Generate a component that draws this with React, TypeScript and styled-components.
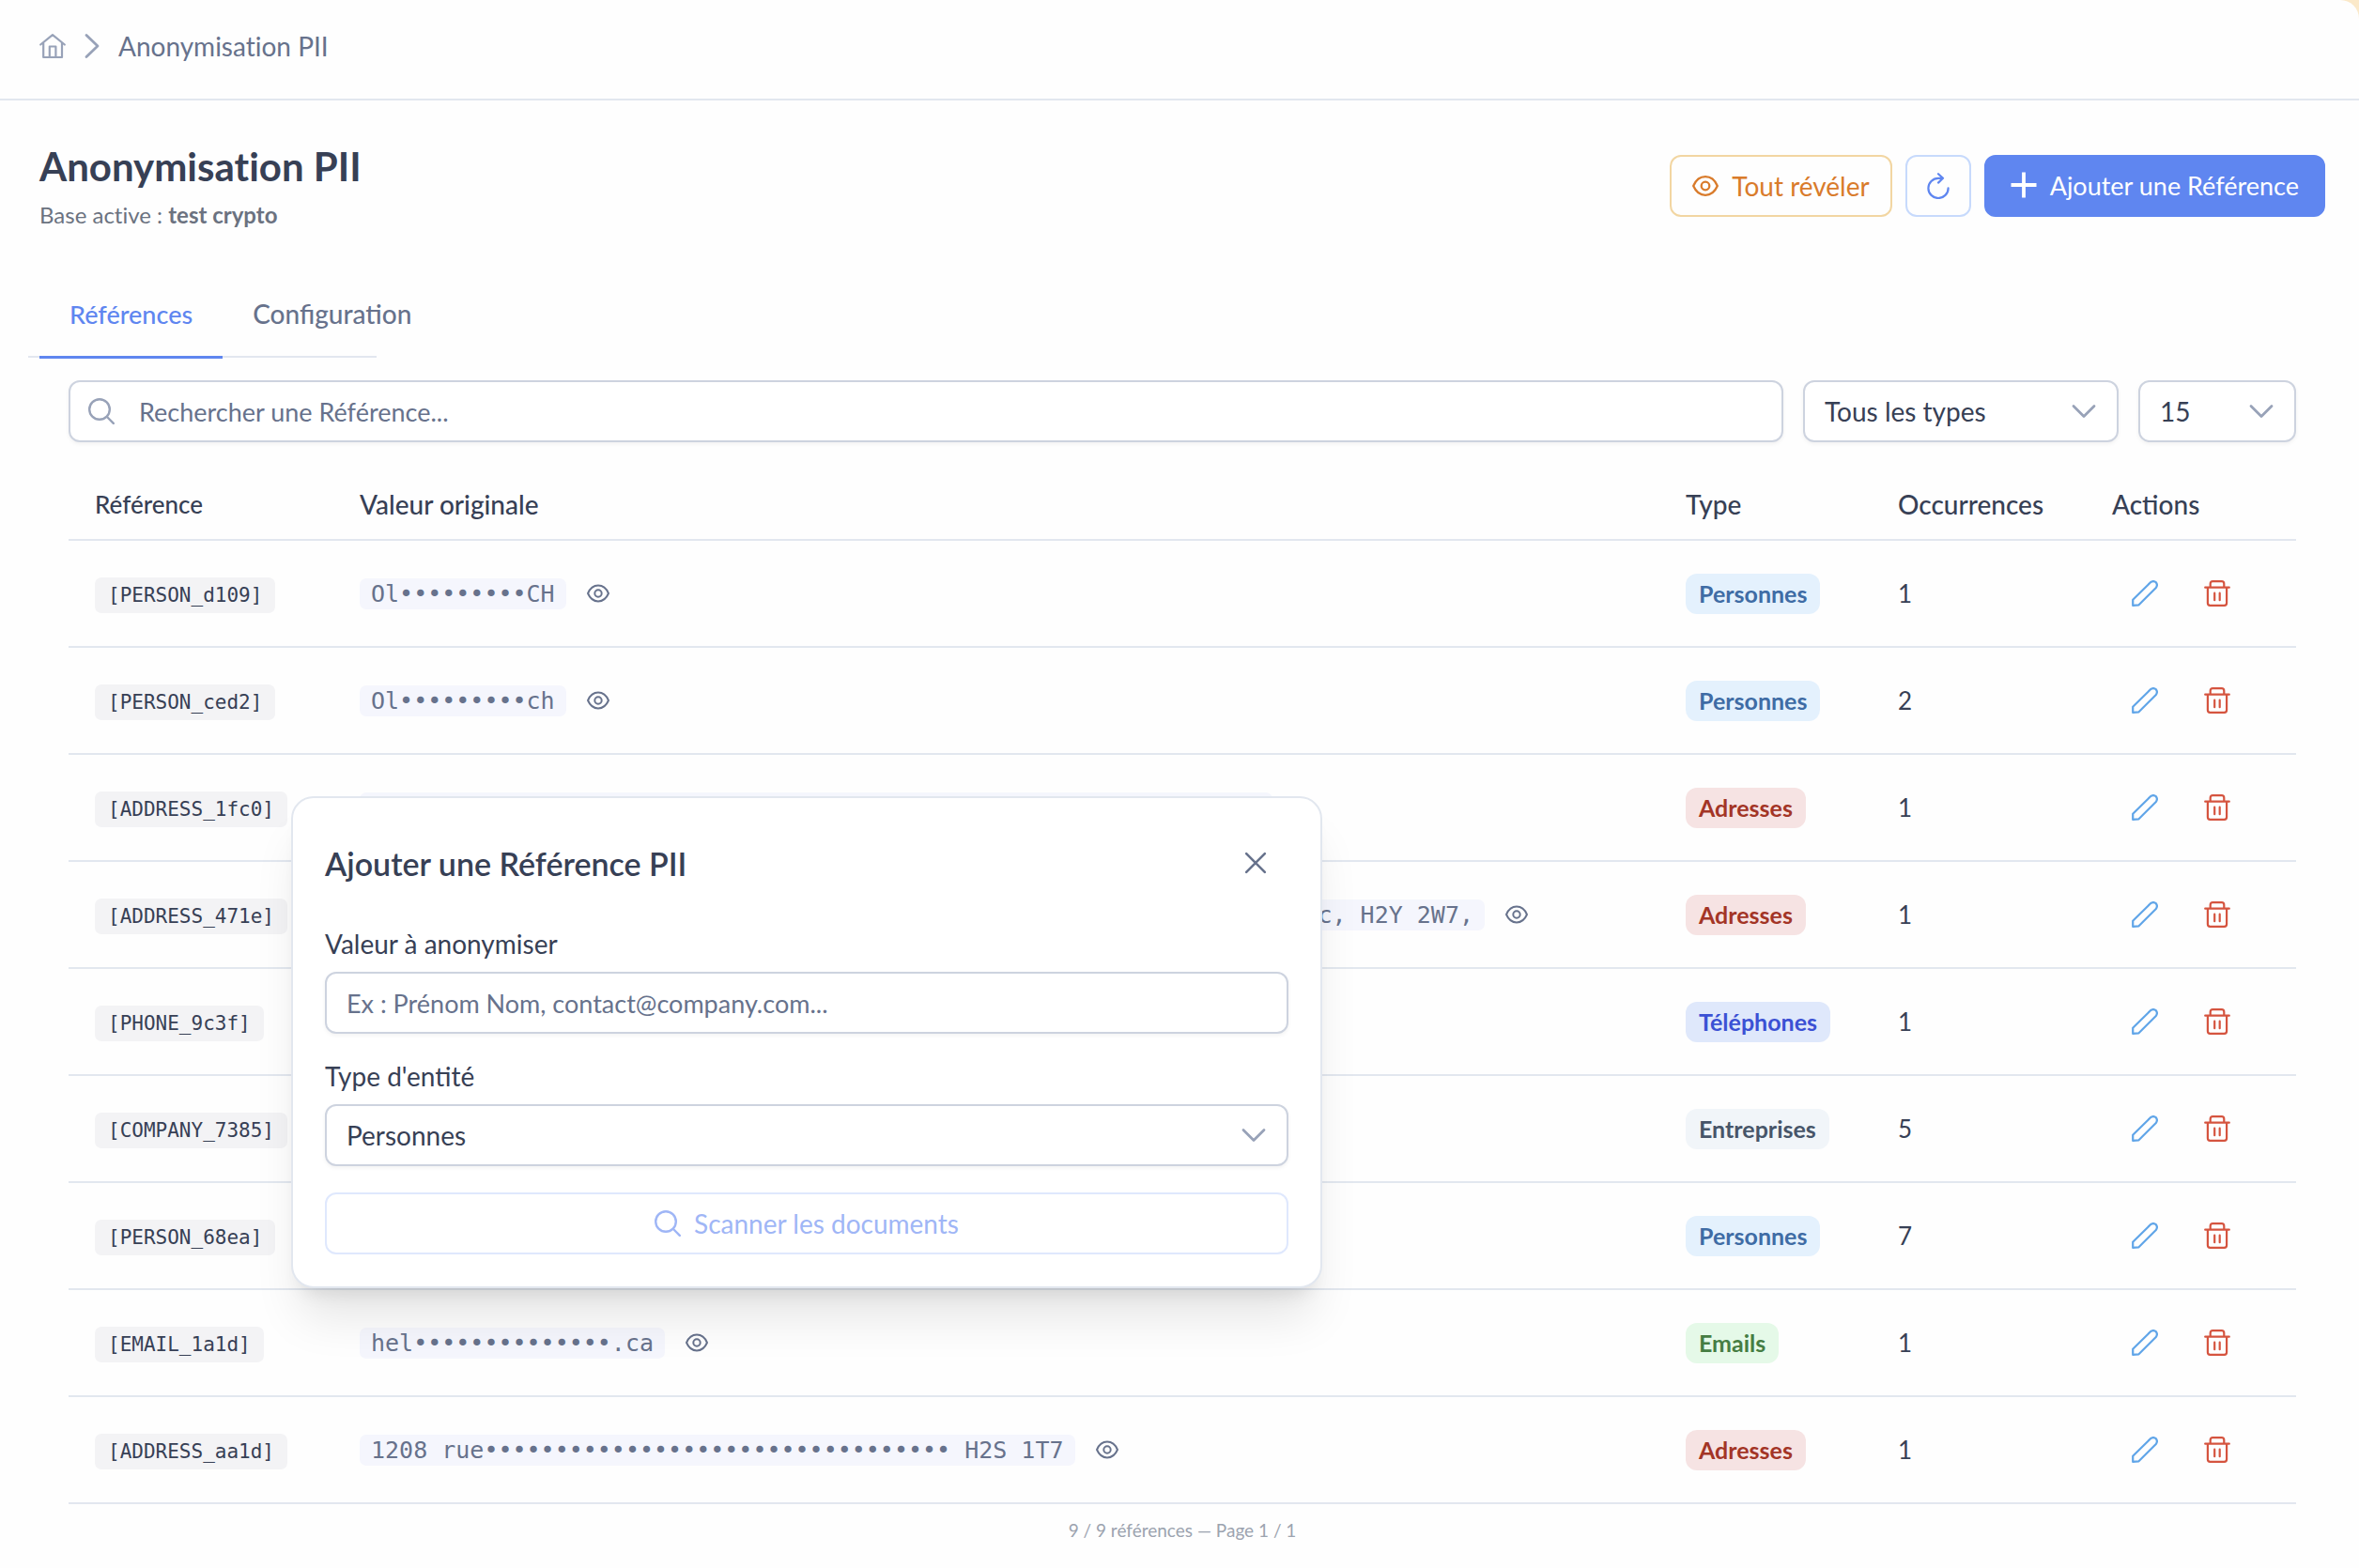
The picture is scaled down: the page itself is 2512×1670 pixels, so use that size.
import React from "react";
import styled, { createGlobalStyle } from "styled-components";

const mono = `"DejaVu Sans Mono", "Liberation Mono", monospace`;

const color = {
  text: "#374055",
  muted: "#67728c",
  faint: "#98a2b8",
  line: "#e2e7ef",
  field: "#cdd3df",
  primary: "#5f86f0",
};

const GlobalStyle = createGlobalStyle`
  * { box-sizing: border-box; }
  body {
    margin: 0;
    background: #fbe9c9;
    color: ${color.text};
    font-family: Lato, "Noto Sans", sans-serif;
    font-size: 28px;
  }
  button, input, select { font: inherit; color: inherit; }
`;

const Shell = styled.div`
  min-height: 100vh;
  border-top-right-radius: 20px;
  background: #fefefe;
`;

const Glyph = styled.svg<{ $size: number }>`
  display: block;
  flex: none;
  width: ${(p) => p.$size}px;
  height: ${(p) => p.$size}px;
  fill: none;
  stroke: currentColor;
  stroke-linecap: round;
  stroke-linejoin: round;
`;

type IconProps = { size: number };

const HomeIcon = ({ size }: IconProps) => (
  <Glyph $size={size} viewBox="0 0 28 28" strokeWidth="2.200" aria-hidden="true">
    <path d="M1.200 12.500 14 2.200 26.800 12.500M4.200 10.500V26H24V10.500M10.800 26V14.500H17.400V26" />
  </Glyph>
);
const ChevronRight = ({ size }: IconProps) => (
  <Glyph $size={size} viewBox="0 0 28 28" strokeWidth="2.800" aria-hidden="true">
    <path d="M8 2.500 20 14 8 25.500" />
  </Glyph>
);
const ChevronDown = ({ size }: IconProps) => (
  <Glyph $size={size} viewBox="0 0 28 28" strokeWidth="2.800" aria-hidden="true">
    <path d="M3 8.500 14 19.500 25 8.500" />
  </Glyph>
);
const EyeIcon = ({ size }: IconProps) => (
  <Glyph $size={size} viewBox="0 0 28 28" strokeWidth="2.300" aria-hidden="true">
    <path d="M1.200 14C4 7.500 8.500 4.200 14 4.200S24 7.500 26.800 14C24 20.500 19.500 23.800 14 23.800S4 20.500 1.200 14Z" />
    <circle cx="14" cy="14" r="4.300" />
  </Glyph>
);
const RefreshIcon = ({ size }: IconProps) => (
  <Glyph $size={size} viewBox="0 0 28 28" strokeWidth="2.200" aria-hidden="true">
    <path d="M18.500 5.800H14A10.600 10.600 0 1 0 24.600 16.400M14 1.200 19 5.800 14 10.600" />
  </Glyph>
);
const PlusIcon = ({ size }: IconProps) => (
  <Glyph $size={size} viewBox="0 0 28 28" strokeWidth="3.800" aria-hidden="true">
    <path strokeLinecap="butt" d="M14 .5V27.500M.5 14H27.500" />
  </Glyph>
);
const SearchIcon = ({ size }: IconProps) => (
  <Glyph $size={size} viewBox="0 0 28 28" strokeWidth="2.400" aria-hidden="true">
    <circle cx="12" cy="12" r="10.800" />
    <path d="M20 20 26.800 26.800" />
  </Glyph>
);
const PencilIcon = ({ size }: IconProps) => (
  <Glyph $size={size} viewBox="0 0 28 28" strokeWidth="2.200" aria-hidden="true">
    <path d="M1.200 26.800V20.800L20 2.200Q23 0 25.800 2.200 28 5 25.800 8L7.500 26.300Z" />
  </Glyph>
);
const TrashIcon = ({ size }: IconProps) => (
  <Glyph $size={size} viewBox="0 0 28 28" strokeWidth="2.200" aria-hidden="true">
    <path d="M1.200 7.700H26.800M3.900 7.700V24.300Q3.900 26.800 6.400 26.800H21.600Q24.100 26.800 24.100 24.300V7.700M6.700 7.700V3.700Q6.700 1.200 9.200 1.200H18.800Q21.300 1.200 21.300 3.700V7.700M11.200 13.700V21.200M16.700 13.700V21.200" />
  </Glyph>
);
const CloseIcon = ({ size }: IconProps) => (
  <Glyph $size={size} viewBox="0 0 28 28" strokeWidth="3" aria-hidden="true">
    <path d="M2.500 2.500 25.500 25.500M25.500 2.500 2.500 25.500" />
  </Glyph>
);

const TopBar = styled.header`
  height: 107px;
  padding: 0 42px 8px;
  border-bottom: 2px solid ${color.line};
`;
const Crumbs = styled.nav`
  display: flex;
  align-items: center;
  gap: 14px;
  height: 100%;
  color: ${color.faint};
`;
const CrumbLink = styled.a`
  color: inherit;
`;
const Crumb = styled.span`
  color: ${color.muted};
  font-variant-ligatures: none;
`;

const PageHead = styled.div`
  display: flex;
  justify-content: space-between;
  padding: 44px 36px 0 42px;
`;
const Title = styled.h1`
  margin: 0;
  font-size: 42px;
  line-height: 52px;
  font-weight: 700;
  font-variant-ligatures: none;
`;
const Base = styled.p`
  margin: 10px 0 0;
  font-size: 24px;
  line-height: 32px;
  color: #6b7280;
  font-variant-ligatures: none;
`;
const HeadActions = styled.div`
  display: flex;
  align-items: flex-start;
  gap: 14px;
  padding-top: 14px;
`;
type Tone = "amber" | "outline" | "primary";
const buttonPadding = { amber: "0 22px", outline: "0 19px", primary: "0 26px 2px" };
const buttonBorder = { amber: "#f2d6a2", outline: "#c7dafc", primary: color.primary };
const buttonText = { amber: "#d97b2b", outline: color.primary, primary: "#fff" };
const Button = styled.button<{ $tone: Tone }>`
  display: flex;
  align-items: center;
  gap: 14px;
  height: 66px;
  padding: ${(p) => buttonPadding[p.$tone]};
  border: 2px solid ${(p) => buttonBorder[p.$tone]};
  border-radius: 12px;
  background: ${(p) => (p.$tone === "primary" ? color.primary : "transparent")};
  color: ${(p) => buttonText[p.$tone]};
  font-size: ${(p) => (p.$tone === "primary" ? 27 : 28)}px;
`;

const TabList = styled.div`
  display: flex;
  width: 371px;
  height: 92px;
  margin: 44px 0 0 30px;
  padding: 0 12px;
  white-space: nowrap;
  border-bottom: 2px solid ${color.line};
`;
const Tab = styled.button<{ $active?: boolean }>`
  flex: none;
  height: 93px;
  padding: 0 32px;
  border: 0;
  border-bottom: 3px solid ${(p) => (p.$active ? color.primary : "transparent")};
  background: none;
  font-size: ${(p) => (p.$active ? 27 : 28)}px;
  font-weight: 500;
  color: ${(p) => (p.$active ? color.primary : color.muted)};
`;

const Panel = styled.main`
  padding: 24px 67px 0 73px;
`;
const Filters = styled.div`
  display: flex;
  gap: 21px;
`;
const Field = styled.div<{ $width?: number }>`
  display: flex;
  align-items: center;
  position: relative;
  flex: ${(p) => (p.$width ? `0 0 ${p.$width}px` : "1 1 auto")};
  height: 66px;
  border: 2px solid ${color.field};
  border-radius: 12px;
  background: #fff;
  box-shadow: 0 2px 4px rgba(18, 18, 23, 0.05);
  color: ${color.faint};
`;
const SearchBox = styled(Field)`
  gap: 5px;
  padding-left: 19px;
`;
const TextInput = styled.input`
  flex: 1;
  min-width: 0;
  height: 100%;
  padding: 0 21px;
  border: 0;
  outline: 0;
  background: none;
  color: ${color.text};
  font-size: 27px;
  &::placeholder {
    color: ${color.muted};
    opacity: 1;
  }
`;
const Select = styled.select`
  width: 100%;
  height: 100%;
  padding: 0 21px;
  border: 0;
  outline: 0;
  background: none;
  appearance: none;
  color: ${color.text};
`;
const SelectArrow = styled.span`
  position: absolute;
  right: 21px;
  pointer-events: none;
`;

const Table = styled.table`
  width: 100%;
  margin-top: 28px;
  border-collapse: separate;
  border-spacing: 0;
  table-layout: fixed;
`;
const Th = styled.th<{ $width?: number; $compact?: boolean }>`
  width: ${(p) => (p.$width ? `${p.$width}px` : "auto")};
  height: 77px;
  padding: 0 28px;
  border-bottom: 2px solid ${color.line};
  text-align: left;
  font-size: ${(p) => (p.$compact ? 26 : 28)}px;
  font-weight: 500;
`;
const Td = styled.td`
  height: 114px;
  padding: 0 28px;
  border-bottom: 2px solid ${color.line};
  font-size: 26px;
  white-space: nowrap;
`;
const RefCode = styled.code`
  display: inline-block;
  margin-top: 4px;
  padding: 0 14px;
  border-radius: 7px;
  background: #f3f3f5;
  font: 21px/38px ${mono};
`;
const ValueCell = styled.div`
  display: flex;
  align-items: center;
  gap: 22px;
  color: ${color.muted};
`;
const Value = styled.span`
  padding: 0 12px;
  border-radius: 7px;
  background: #f5f6fd;
  font: 25px/33px ${mono};
`;
const IconButton = styled.button<{ $color: string }>`
  display: flex;
  padding: 0;
  border: 0;
  background: none;
  color: ${(p) => p.$color};
`;
const RowActions = styled.div`
  display: flex;
  gap: 49px;
  padding-left: 21px;
`;

const tones = {
  Personnes: ["#e4f1fd", "#3f6ca5"],
  Adresses: ["#f6e3e3", "#a33526"],
  "Téléphones": ["#dfe8fb", "#3b51d4"],
  Entreprises: ["#f1f5f9", "#475569"],
  Emails: ["#e5f9e8", "#467d43"],
};
type Kind = keyof typeof tones;
const Tag = styled.span<{ $kind: Kind }>`
  display: inline-block;
  padding: 0 14px;
  border-radius: 12px;
  background: ${(p) => tones[p.$kind][0]};
  color: ${(p) => tones[p.$kind][1]};
  font-size: 25px;
  line-height: 43px;
  font-weight: 700;
`;
const Count = styled.p`
  margin: 14px 0 0;
  text-align: center;
  font-size: 19px;
  line-height: 28px;
  color: #9ca3af;
`;

const Modal = styled.section`
  position: absolute;
  left: 310px;
  top: 848px;
  width: 1098px;
  padding: 34px;
  border: 2px solid ${color.line};
  border-radius: 24px;
  background: #fff;
  box-shadow: 0 40px 50px -10px rgba(0, 0, 0, 0.1), 0 16px 20px -12px rgba(0, 0, 0, 0.1);
`;
const ModalHead = styled.div`
  display: flex;
  align-items: center;
  justify-content: space-between;
  height: 70px;
  padding-right: 23px;
`;
const ModalTitle = styled.h2`
  margin: 0;
  font-size: 34px;
  font-weight: 600;
`;
const FormRow = styled.div`
  padding-top: 34px;
  & + & { padding-top: 28px; }
`;
const Label = styled.label`
  display: block;
  margin-bottom: 13px;
  line-height: 34px;
`;
const ScanButton = styled.button`
  display: flex;
  align-items: center;
  justify-content: center;
  gap: 14px;
  width: 100%;
  height: 66px;
  margin-top: 28px;
  border: 2px solid #dfe8fd;
  border-radius: 12px;
  background: none;
  color: #9fb6f6;
`;

const dots = (n: number) => "•".repeat(n);

const rows: { code: string; value: string; kind: Kind; count: number }[] = [
  { code: "[PERSON_d109]", value: `Ol${dots(9)}CH`, kind: "Personnes", count: 1 },
  { code: "[PERSON_ced2]", value: `Ol${dots(9)}ch`, kind: "Personnes", count: 2 },
  { code: "[ADDRESS_1fc0]", value: dots(63), kind: "Adresses", count: 1 },
  { code: "[ADDRESS_471e]", value: `${dots(67)}c, H2Y 2W7,`, kind: "Adresses", count: 1 },
  { code: "[PHONE_9c3f]", value: dots(12), kind: "Téléphones", count: 1 },
  { code: "[COMPANY_7385]", value: dots(12), kind: "Entreprises", count: 5 },
  { code: "[PERSON_68ea]", value: dots(12), kind: "Personnes", count: 7 },
  { code: "[EMAIL_1a1d]", value: `hel${dots(14)}.ca`, kind: "Emails", count: 1 },
  { code: "[ADDRESS_aa1d]", value: `1208 rue${dots(33)} H2S 1T7`, kind: "Adresses", count: 1 },
];

export default function App() {
  return (
    <Shell>
      <GlobalStyle />
      <TopBar>
        <Crumbs aria-label="Fil d'Ariane">
          <CrumbLink href="#" aria-label="Accueil"><HomeIcon size={28} /></CrumbLink>
          <ChevronRight size={28} />
          <Crumb>Anonymisation PII</Crumb>
        </Crumbs>
      </TopBar>

      <PageHead>
        <div>
          <Title>Anonymisation PII</Title>
          <Base>Base active : <strong>test crypto</strong></Base>
        </div>
        <HeadActions>
          <Button $tone="amber"><EyeIcon size={28} />Tout révéler</Button>
          <Button $tone="outline" aria-label="Actualiser"><RefreshIcon size={28} /></Button>
          <Button $tone="primary"><PlusIcon size={28} />Ajouter une Référence</Button>
        </HeadActions>
      </PageHead>

      <TabList role="tablist">
        <Tab role="tab" aria-selected="true" $active>Références</Tab>
        <Tab role="tab" aria-selected="false">Configuration</Tab>
      </TabList>

      <Panel>
        <Filters>
          <SearchBox>
            <SearchIcon size={28} />
            <TextInput type="text" placeholder="Rechercher une Référence..." aria-label="Rechercher" />
          </SearchBox>
          <Field $width={336}>
            <Select aria-label="Type"><option>Tous les types</option></Select>
            <SelectArrow><ChevronDown size={28} /></SelectArrow>
          </Field>
          <Field $width={168}>
            <Select aria-label="Lignes par page"><option>15</option></Select>
            <SelectArrow><ChevronDown size={28} /></SelectArrow>
          </Field>
        </Filters>

        <Table>
          <thead>
            <tr>
              <Th $width={282} $compact>Référence</Th>
              <Th>Valeur originale</Th>
              <Th $width={226}>Type</Th>
              <Th $width={228}>Occurrences</Th>
              <Th $width={224}>Actions</Th>
            </tr>
          </thead>
          <tbody>
            {rows.map((row) => (
              <tr key={row.code}>
                <Td><RefCode>{row.code}</RefCode></Td>
                <Td>
                  <ValueCell>
                    <Value>{row.value}</Value>
                    <IconButton $color={color.muted} aria-label="Révéler"><EyeIcon size={24} /></IconButton>
                  </ValueCell>
                </Td>
                <Td><Tag $kind={row.kind}>{row.kind}</Tag></Td>
                <Td>{row.count}</Td>
                <Td>
                  <RowActions>
                    <IconButton $color="#60a5e8" aria-label="Modifier"><PencilIcon size={28} /></IconButton>
                    <IconButton $color="#d5543f" aria-label="Supprimer"><TrashIcon size={28} /></IconButton>
                  </RowActions>
                </Td>
              </tr>
            ))}
          </tbody>
        </Table>
        <Count>9 / 9 références — Page 1 / 1</Count>
      </Panel>

      <Modal role="dialog" aria-labelledby="modal-title">
        <ModalHead>
          <ModalTitle id="modal-title">Ajouter une Référence PII</ModalTitle>
          <IconButton $color={color.muted} aria-label="Fermer"><CloseIcon size={24} /></IconButton>
        </ModalHead>
        <FormRow>
          <Label htmlFor="pii-value">Valeur à anonymiser</Label>
          <Field>
            <TextInput id="pii-value" type="text" placeholder="Ex : Prénom Nom, contact@company.com..." />
          </Field>
        </FormRow>
        <FormRow>
          <Label htmlFor="pii-type">Type d'entité</Label>
          <Field>
            <Select id="pii-type"><option>Personnes</option></Select>
            <SelectArrow><ChevronDown size={28} /></SelectArrow>
          </Field>
        </FormRow>
        <ScanButton disabled><SearchIcon size={28} />Scanner les documents</ScanButton>
      </Modal>
    </Shell>
  );
}
